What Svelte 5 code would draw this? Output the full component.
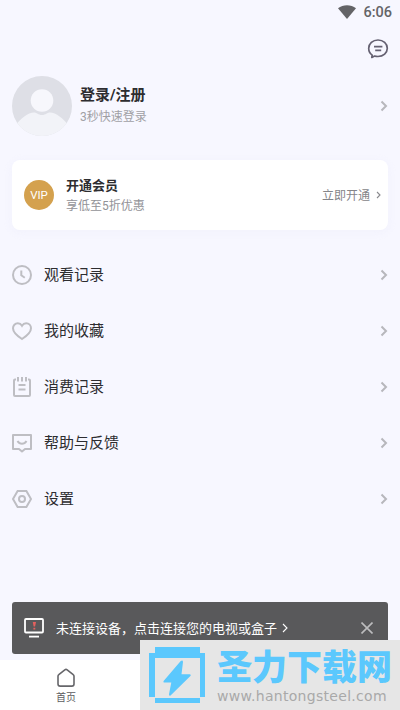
<script>
    const menu = [
        { icon: 'clock', label: '观看记录' },
        { icon: 'heart', label: '我的收藏' },
        { icon: 'bill', label: '消费记录' },
        { icon: 'help', label: '帮助与反馈' },
        { icon: 'gear', label: '设置' }
    ];

    let showNotice = $state(true);
</script>

{#snippet chevron()}
    <svg class="chevron" viewBox="0 0 8 12" width="8" height="12" aria-hidden="true">
        <path d="M1.5 1.5 6 6l-4.5 4.5" />
    </svg>
{/snippet}

<div class="screen">
    <div class="status">
        <svg viewBox="0 0 18 14" width="18" height="14" aria-hidden="true">
            <path d="M0 3.2C5-.7 13-.7 18 3.2L9 14z" fill="#646467" />
        </svg>
        <span>6:06</span>
    </div>

    <header>
        <svg viewBox="0 0 22 22" width="22" height="22" aria-label="消息">
            <path
                d="M5.2 17.1C2.8 15.5 1.7 13.2 1.7 10.3 1.7 5.7 5.7 2 11 2s9.3 3.7 9.3 8.3-4 8.2-9.3 8.2c-1.4 0-2.4-.1-3.4-.5l-2.8 1.4z"
                fill="none" stroke="#656172" stroke-width="1.7" stroke-linejoin="round"
            />
            <path d="M7 8.7h8.4M8.2 12.3h6" stroke="#656172" stroke-width="1.7" />
        </svg>
    </header>

    <section class="profile">
        <svg class="avatar" viewBox="0 0 60 60" width="60" height="60" aria-hidden="true">
            <defs>
                <clipPath id="round"><circle cx="30" cy="30" r="30" /></clipPath>
            </defs>
            <g clip-path="url(#round)">
                <rect width="60" height="60" fill="#dedfe6" />
                <path d="M2 51C9 42 16 36.5 22 36.5c3 0 4 2.5 8 2.5s5-2.5 8-2.5C44 36.5 51 42 58 51v12H2z" fill="#f2f3f8" />
                <circle cx="30" cy="24.5" r="11.3" fill="#f7f7fc" />
            </g>
        </svg>
        <div class="who">
            <h1>登录/注册</h1>
            <p>3秒快速登录</p>
        </div>
        {@render chevron()}
    </section>

    <section class="vip">
        <span class="badge">VIP</span>
        <div class="offer">
            <h2>开通会员</h2>
            <p>享低至5折优惠</p>
        </div>
        <span class="open">立即开通</span>
        <svg viewBox="0 0 5 8" width="5" height="8" aria-hidden="true">
            <path d="m1 1 3 3-3 3" fill="none" stroke="#89898d" stroke-width="1.1" />
        </svg>
    </section>

    <ul class="menu">
        {#each menu as item}
            <li>
                <svg class="icon" viewBox="0 0 20 20" width="20" height="20" aria-hidden="true">
                    {#if item.icon === 'clock'}
                        <circle cx="10" cy="10" r="9" />
                        <path d="M9.3 5.5v4.8l3.5 2.4" />
                    {:else if item.icon === 'heart'}
                        <path d="M10 18C6.5 15.7 1 12 1 7.2 1 4.4 3.1 2.3 5.8 2.3c1.8 0 3.3.9 4.2 2.4.9-1.5 2.4-2.4 4.2-2.4C16.9 2.3 19 4.4 19 7.2 19 12 13.5 15.7 10 18z" />
                    {:else if item.icon === 'bill'}
                        <path d="M4 2.5H3q-1 0-1 1v14.4q0 1 1 1h14q1 0 1-1V3.5q0-1-1-1h-1" />
                        <path d="M6 0v4.4M10 0v4.4M14 0v4.4" />
                        <path d="M6.5 8h7M6.500 12.500h7" />
                    {:else if item.icon === 'help'}
                        <path d="M1 2h18v14h-6L10 18.500 7 16H1z" stroke-linejoin="round" />
                        <path d="M5.5 8c2.3 3.800 6.700 3.800 9 0" />
                    {:else}
                        <path d="M5.6 2h8.8L19 10l-4.6 8H5.6L1 10z" />
                        <circle cx="10" cy="10" r="3" />
                    {/if}
                </svg>
                <span>{item.label}</span>
                {@render chevron()}
            </li>
        {/each}
    </ul>

    {#if showNotice}
        <div class="notice">
            <svg viewBox="0 0 20 20" width="20" height="20" aria-hidden="true">
                <rect x="1" y="1" width="18" height="13.5" rx="1" fill="none" stroke="#fff" stroke-width="1.8" />
                <path d="M5 18.6h10" stroke="#fff" stroke-width="1.8" />
                <path d="M8.8 4h3.2l-.9 4.6H9.6zM9.4 9.7h1.9v1.8H9.4z" fill="#e4605e" />
            </svg>
            <span>未连接设备，点击连接您的电视或盒子</span>
            <svg class="more" viewBox="0 0 6 10" width="6" height="10" aria-hidden="true">
                <path d="m1 1 4 4-4 4" fill="none" stroke="#fff" stroke-width="1.1" />
            </svg>
            <button aria-label="关闭" onclick={() => (showNotice = false)}>
                <svg viewBox="0 0 12 12" width="12" height="12" aria-hidden="true">
                    <path d="m.5.5 11 11M11.5.5l-11 11" stroke="#bcbcbe" stroke-width="1.6" />
                </svg>
            </button>
        </div>
    {/if}

    <nav>
        <div class="tab">
            <svg viewBox="0 0 20 20" width="20" height="20" aria-hidden="true">
                <path d="M2 8.3Q2 7.3 2.8 6.7L8.8 1.8q1.2-.8 2.4 0l6 4.9q.8.6.8 1.6v7.6q0 2.2-2.2 2.2H4.2Q2 18.1 2 15.9z" fill="none" stroke="#66666a" stroke-width="1.6" />
            </svg>
            <span>首页</span>
        </div>
    </nav>

    <div class="sitemark">
        <svg viewBox="0 0 56 56" width="56" height="56" aria-hidden="true">
            <path d="M6 0h45v6h5v44h-5v6H6v-6H0V6h6zM6 11v39h45V11z" fill="#5bc8fd" fill-rule="evenodd" />
            <path d="M6 50.5h45" stroke="#e6e6e6" />
            <path d="M31.5 14.3 14.6 34q-.9 1.5.8 1.5h6.9L20 47.3q0 2.4 1.8.9L41.4 29q1.1-1.8-.8-1.8h-8.1L34 15q-.2-2.4-2.5-.7z" fill="#5bc8fd" />
        </svg>
        <div class="site">
            <strong>圣力下载网</strong>
            <span>www.hantongsteel.com</span>
        </div>
    </div>
</div>

<style>
    :global(body) {
        margin: 0;
    }

    .screen {
        position: relative;
        display: flex;
        flex-direction: column;
        box-sizing: border-box;
        width: 400px;
        height: 710px;
        overflow: hidden;
        background: #f7f7ff;
        font-family: Roboto, 'Noto Sans CJK SC', sans-serif;
        color: #2d2d30;
    }

    svg {
        display: block;
        flex: none;
    }

    h1, h2, p {
        margin: 0;
    }

    .status {
        display: flex;
        align-items: center;
        justify-content: flex-end;
        gap: 7px;
        height: 24px;
        padding-right: 8px;
        font-size: 14.5px;
        font-weight: 500;
        color: #646467;
    }

    header {
        display: flex;
        align-items: center;
        justify-content: flex-end;
        height: 50px;
        padding-right: 11px;
    }

    .profile {
        display: flex;
        align-items: center;
        height: 60px;
        padding: 2px 12px 0;
    }

    .who {
        flex: 1;
        padding-left: 8px;
    }

    h1 {
        font-size: 15px;
        line-height: 20px;
        padding-bottom: 2px;
        font-weight: 700;
    }

    .who p {
        font-size: 12px;
        line-height: 21px;
        color: #a0a0a5;
    }

    .chevron path {
        fill: none;
        stroke: #b7b7bc;
        stroke-width: 2;
    }

    .vip {
        display: flex;
        align-items: center;
        height: 70px;
        margin: 24px 12px 0;
        padding: 0 7px 0 12px;
        box-sizing: border-box;
        border-radius: 8px;
        background: #fff;
        box-shadow: 0 2px 8px #e9e9f760;
    }

    .badge {
        display: grid;
        place-items: center;
        width: 30px;
        height: 30px;
        border-radius: 50%;
        background: #d4a14e;
        color: #fff;
        font-size: 11.5px;
    }

    .offer {
        flex: 1;
        padding: 2px 0 0 12px;
    }

    h2 {
        font-size: 13px;
        line-height: 20px;
        font-weight: 700;
    }

    .offer p {
        font-size: 12px;
        line-height: 20px;
        color: #929297;
    }

    .open {
        margin-right: 6px;
        padding-bottom: 2px;
        font-size: 12px;
        color: #858589;
    }

    .menu {
        margin: 17px 0 0;
        padding: 0 12px;
        list-style: none;
    }

    .menu li {
        display: flex;
        align-items: center;
        height: 56px;
        font-size: 15px;
    }

    .menu span {
        flex: 1;
        padding: 0 0 4px 12px;
    }

    .icon {
        fill: none;
        stroke: #bebec3;
        stroke-width: 2;
    }

    .notice {
        display: flex;
        align-items: center;
        box-sizing: border-box;
        height: 52px;
        margin: auto 12px 6px;
        padding: 0 15px 0 12px;
        border-radius: 3px;
        background: #59595b;
        color: #fff;
        font-size: 13px;
    }

    .notice span {
        padding: 0 0 2px 12px;
    }

    .more {
        margin-left: 5px;
    }

    button {
        margin-left: auto;
        padding: 0;
        border: none;
        background: none;
    }

    nav {
        height: 50px;
        background: #fff;
    }

    .tab {
        display: flex;
        flex-direction: column;
        align-items: center;
        width: 132px;
        padding-top: 8px;
        font-size: 10px;
        line-height: 19px;
        color: #5c5c60;
    }

    .sitemark {
        position: absolute;
        right: 0;
        bottom: 0;
        display: flex;
        box-sizing: border-box;
        width: 260px;
        height: 70px;
        padding: 7px 0 0 9px;
        background: #e6e6e6;
    }

    .site {
        display: flex;
        flex-direction: column;
        padding-left: 12px;
        white-space: nowrap;
    }

    .site strong {
        font-size: 35px;
        line-height: 44px;
        font-weight: 900;
        color: #5bc8fd;
    }

    .site span {
        font-family: 'DejaVu Sans', sans-serif;
        font-size: 14px;
        line-height: 10px;
        letter-spacing: 0.3px;
        color: #a9a9a9;
    }
</style>
